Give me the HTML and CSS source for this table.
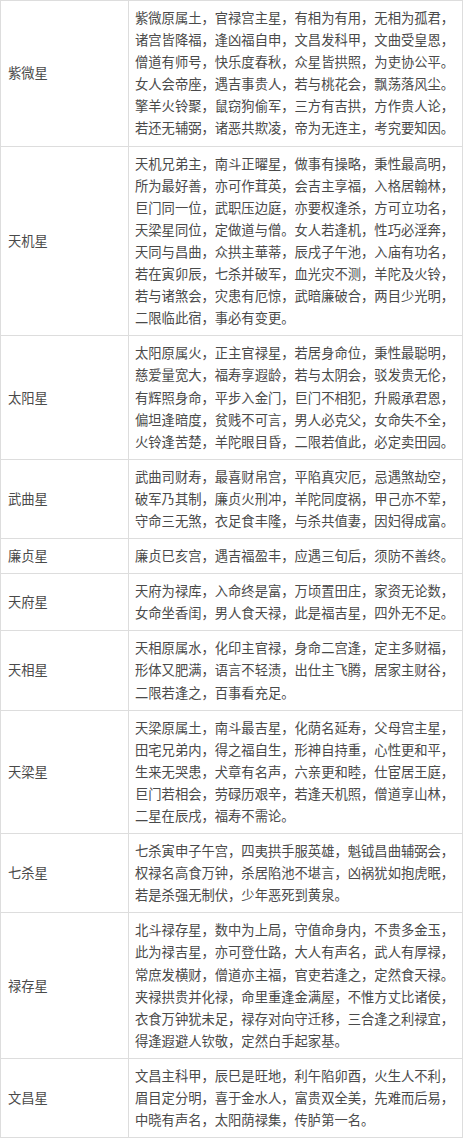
FILE: index.html
```html
<!DOCTYPE html>
<html lang="zh-CN">
<head>
<meta charset="utf-8">
<link rel="stylesheet" href="styles.css">
</head>
<body>
<table class="stars">
<tr><td class="name">紫微星</td><td class="text">紫微原属土，官禄宫主星，有相为有用，无相为孤君，<br>诸宫皆降福，逢凶福自申，文昌发科甲，文曲受皇恩，<br>僧道有师号，快乐度春秋，众星皆拱照，为吏协公平。<br>女人会帝座，遇吉事贵人，若与桃花会，飘荡落风尘。<br>擎羊火铃聚，鼠窃狗偷军，三方有吉拱，方作贵人论，<br>若还无辅弼，诸恶共欺凌，帝为无连主，考究要知因。</td></tr>
<tr><td class="name">天机星</td><td class="text">天机兄弟主，南斗正曜星，做事有操略，秉性最高明，<br>所为最好善，亦可作茸英，会吉主享福，入格居翰林，<br>巨门同一位，武职压边庭，亦要权逢杀，方可立功名，<br>天梁星同位，定做道与僧。女人若逢机，性巧必淫奔，<br>天同与昌曲，众拱主華蒂，辰戌子午池，入庙有功名，<br>若在寅卯辰，七杀并破军，血光灾不测，羊陀及火铃，<br>若与诸煞会，灾患有厄惊，武暗廉破合，两目少光明，<br>二限临此宿，事必有变更。</td></tr>
<tr><td class="name">太阳星</td><td class="text">太阳原属火，正主官禄星，若居身命位，秉性最聪明，<br>慈爱量宽大，福寿享遐龄，若与太阴会，驳发贵无伦，<br>有辉照身命，平步入金门，巨门不相犯，升殿承君恩，<br>偏坦逢暗度，贫贱不可言，男人必克父，女命失不全，<br>火铃逢苦楚，羊陀眼目昏，二限若值此，必定卖田园。</td></tr>
<tr><td class="name">武曲星</td><td class="text">武曲司财寿，最喜财帛宫，平陷真灾厄，忌遇煞劫空，<br>破军乃其制，廉贞火刑冲，羊陀同度祸，甲己亦不荤，<br>守命三无煞，衣足食丰隆，与杀共值妻，因妇得成富。</td></tr>
<tr><td class="name">廉贞星</td><td class="text">廉贞巳亥宫，遇吉福盈丰，应遇三旬后，须防不善终。</td></tr>
<tr><td class="name">天府星</td><td class="text">天府为禄库，入命终是富，万顷置田庄，家资无论数，<br>女命坐香闺，男人食天禄，此是福吉星，四外无不足。</td></tr>
<tr><td class="name">天相星</td><td class="text">天相原属水，化印主官禄，身命二宫逢，定主多财福，<br>形体又肥满，语言不轻渍，出仕主飞腾，居家主财谷，<br>二限若逢之，百事看充足。</td></tr>
<tr><td class="name">天梁星</td><td class="text">天梁原属土，南斗最吉星，化荫名延寿，父母宫主星，<br>田宅兄弟内，得之福自生，形神自持重，心性更和平，<br>生来无哭患，犬章有名声，六亲更和睦，仕宦居王庭，<br>巨门若相会，劳碌历艰辛，若逢天机照，僧道享山林，<br>二星在辰戌，福寿不需论。</td></tr>
<tr><td class="name">七杀星</td><td class="text">七杀寅申子午宫，四夷拱手服英雄，魁钺昌曲辅弼会，<br>权禄名高食万钟，杀居陷池不堪言，凶祸犹如抱虎眠，<br>若是杀强无制伏，少年恶死到黄泉。</td></tr>
<tr><td class="name">禄存星</td><td class="text">北斗禄存星，数中为上局，守值命身内，不贵多金玉，<br>此为禄吉星，亦可登仕路，大人有声名，武人有厚禄，<br>常庶发横财，僧道亦主福，官吏若逢之，定然食天禄。<br>夹禄拱贵并化禄，命里重逢金满屋，不惟方丈比诸侯，<br>衣食万钟犹未足，禄存对向守迁移，三合逢之利禄宜，<br>得逢遐避人钦敬，定然白手起家基。</td></tr>
<tr><td class="name">文昌星</td><td class="text">文昌主科甲，辰巳是旺地，利午陷卯酉，火生人不利，<br>眉目定分明，喜于金水人，富贵双全美，先难而后易，<br>中晓有声名，太阳荫禄集，传胪第一名。</td></tr>
</table>
</body>
</html>
```

FILE: styles.css
```css
html, body {
  margin: 0;
  padding: 0;
  background: #ffffff;
}
body {
  font-family: "Noto Sans CJK SC", "Noto Sans", sans-serif;
  font-size: 13.3px;
  color: #4a4a4a;
}
.stars {
  border-collapse: collapse;
  width: 463px;
  table-layout: fixed;
}
.stars td {
  border: 1px solid #dddddd;
  line-height: 22.1px;
  padding: 6px 6px;
  vertical-align: middle;
}
.stars .name {
  width: 114px;
  padding-left: 7px;
}
.stars .text {
  white-space: nowrap;
}
```
